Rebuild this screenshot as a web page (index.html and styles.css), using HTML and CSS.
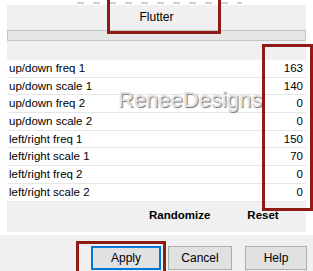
FILE: index.html
```html
<!DOCTYPE html>
<html lang="en">
<head>
    <meta charset="UTF-8">
    <title>Flutter</title>
    <link rel="stylesheet" href="styles.css">
</head>
<body>

<div class="tabs"></div>

<div class="panel">
    <div class="effect-name">Flutter</div>
    <div class="bar"></div>

    <div class="params">
        <div class="row"><span>up/down freq 1</span><span>163</span></div>
        <div class="row"><span>up/down scale 1</span><span>140</span></div>
        <div class="row"><span>up/down freq 2</span><span>0</span></div>
        <div class="row"><span>up/down scale 2</span><span>0</span></div>
        <div class="row"><span>left/right freq 1</span><span>150</span></div>
        <div class="row"><span>left/right scale 1</span><span>70</span></div>
        <div class="row"><span>left/right freq 2</span><span>0</span></div>
        <div class="row"><span>left/right scale 2</span><span>0</span></div>
    </div>

    <div class="panel-foot">
        <span class="randomize">Randomize</span>
        <span class="reset">Reset</span>
    </div>
</div>

<div class="buttons">
    <button class="btn btn-apply">Apply</button>
    <button class="btn btn-cancel">Cancel</button>
    <button class="btn btn-help">Help</button>
</div>

<!-- marca de agua y recuadros rojos encima -->
<div class="watermark">ReneeDesigns</div>
<div class="mark mark-name"></div>
<div class="mark mark-values"></div>
<div class="mark mark-apply"></div>

</body>
</html>
```

FILE: styles.css
```css
html, body {
    margin: 0;
    padding: 0;
}
body {
    position: relative;
    width: 313px;
    height: 271px;
    overflow: hidden;
    background: #ffffff;
    font-family: 'Liberation Sans', Arial, sans-serif;
    font-size: 11.5px;
    color: #000;
}

.tabs {
    height: 2px;
    width: 165px;
    margin: 2px 0 1px 77px;
    background: repeating-linear-gradient(90deg, #cfcfcf 0 7px, transparent 7px 16px);
}

.panel {
    margin-left: 7px;
    width: 299px;
    height: 227px;
    background: #f0f0f0;
}

.effect-name {
    height: 25px;
    line-height: 25px;
    text-align: center;
    font-size: 12px;
}

.bar {
    height: 9px;
    border: 1px solid #c4c4c4;
    background: #e6e6e6;
}

.params {
    margin-top: 19px;
    background: #ffffff;
}
.row {
    display: flex;
    justify-content: space-between;
    height: 16.7px;
    line-height: 16.7px;
    padding: 0 3px 0 2px;
    border-bottom: 1px solid #e6e6e6;
}

.panel-foot {
    display: flex;
    padding: 7px 0 0 142px;
    font-weight: bold;
    font-size: 11.5px;
}
.reset { margin-left: 37px; }

.buttons {
    display: flex;
    margin-top: 3px;
    padding: 11px 0 0 91px;
    height: 25px;
    background: #f0f0f0;
}
.btn {
    height: 24px;
    padding: 0;
    border: 1px solid #adadad;
    background: #e1e1e1;
    font-family: 'Liberation Sans', Arial, sans-serif;
    font-size: 12px;
    color: #000;
}
.btn-apply {
    width: 70px;
    border-color: #0078d7;
    box-shadow: inset 0 0 0 1px #0078d7;
}
.btn-cancel { width: 64px; margin-left: 7px; }
.btn-help { width: 62px; margin-left: 13px; }

.watermark {
    position: absolute;
    left: 118px;
    top: 87px;
    font-size: 22px;
    color: #e4e4e4;
    text-shadow: 1px 1px 1px #6f6f6f;
}

.mark {
    position: absolute;
    border: 3px solid #8e1b14;
}
.mark-name { left: 107px; top: -4px; width: 108px; height: 32px; }
.mark-values { left: 262px; top: 44px; width: 45px; height: 161px; }
.mark-apply { left: 76px; top: 241px; width: 84px; height: 27px; border-bottom-width: 0; }
```
